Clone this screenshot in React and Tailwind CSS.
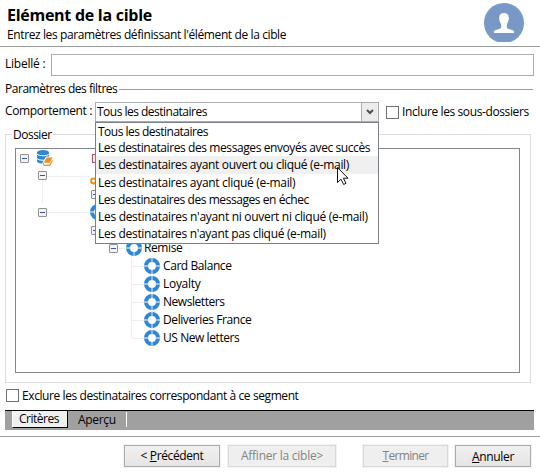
const Target = () => (
  <svg width="16" height="16" viewBox="0 0 16 16" className="shrink-0">
    <circle cx="8" cy="8" r="6" fill="none" stroke="#2f86d2" strokeWidth="4" />
    <path d="M8 0v4.200M8 11.800V16M0 8h4.200M11.800 8H16" stroke="#b9d8f2" strokeWidth="1.300" />
  </svg>
);

const Minus = () => (
  <span className="flex h-[9px] w-[9px] shrink-0 items-center justify-center rounded-[1px] border border-[#919191] bg-[#f4f4f4]">
    <span className="h-px w-[5px] bg-[#3b51a3]" />
  </span>
);

const Check = () => <span className="h-[13px] w-[13px] shrink-0 border border-[#707070] bg-white" />;

const Key = () => (
  <svg width="16" height="16" viewBox="0 0 16 16" className="shrink-0">
    <circle cx="3.500" cy="8" r="2.400" fill="none" stroke="#f09010" strokeWidth="2" />
    <path d="M6 8h9" stroke="#f09010" strokeWidth="2" />
  </svg>
);

const Database = () => (
  <svg width="16" height="16" viewBox="0 0 16 16" className="shrink-0">
    <path d="M0 2.500v8.500c0 3.500 12 3.500 12 0V2.500z" fill="#2f86d2" />
    <ellipse cx="6" cy="2.400" rx="6" ry="2.300" fill="#2f86d2" />
    <path d="M0 4c1.500 2.300 10.500 2.300 12 0M0 8.500c1.500 2.300 10.500 2.300 12 0" fill="none" stroke="#fff" strokeWidth="1" />
    <path d="M9 6.500h7v2L12.500 16H6l-1-2.500z" fill="#fff" />
    <path d="M9.500 7.500h6l-2.700 5.300H6.800z" fill="#f0921a" />
    <path d="M6.600 12.800c-.6 1.500 0 2.500 1 2.500h5l2.800-5" fill="none" stroke="#f0921a" strokeWidth="1.200" />
  </svg>
);

const options = [
  ["Tous les destinataires", "h-[17px]", "tracking-[-0.51px]"],
  ["Les destinataires des messages envoyés avec succès", "h-[16px]", "tracking-[-0.41px]"],
  ["Les destinataires ayant ouvert ou cliqué (e-mail)", "h-[18px] bg-[#f0f0f0]", "tracking-[-0.32px]"],
  ["Les destinataires ayant cliqué (e-mail)", "h-[17px]", "tracking-[-0.31px]"],
  ["Les destinataires des messages en échec", "h-[17px]", "tracking-[-0.44px]"],
  ["Les destinataires n'ayant ni ouvert ni cliqué (e-mail)", "h-[17px]", "tracking-[-0.3px]"],
  ["Les destinataires n'ayant pas cliqué (e-mail)", "h-[17px]", "tracking-[-0.32px]"],
];

const folders = [
  ["Card Balance", "tracking-[-0.42px]"],
  ["Loyalty", "tracking-[-0.3px]"],
  ["Newsletters", "tracking-[-0.45px]"],
  ["Deliveries France", "tracking-[-0.41px]"],
  ["US New letters", "tracking-[-0.43px]"],
];

export default function App() {
  return (
    <div className="flex h-[472px] w-[540px] flex-col overflow-hidden bg-white font-['Open_Sans',sans-serif] text-[12px] leading-4 whitespace-nowrap text-black">
      <header className="flex h-[47px] shrink-0 justify-between border-b border-[#9b9b9b] pr-[16px] pl-[7px]">
        <div>
          <h1 className="mt-[4px] h-[22px] text-[16px] leading-[22px] font-bold tracking-[-0.27px]">Elément de la cible</h1>
          <p className="mt-px tracking-[-0.39px]">Entrez les paramètres définissant l'élément de la cible</p>
        </div>
        <svg width="40" height="39" viewBox="0 0 40 39" className="mt-[3px]">
          <circle cx="20" cy="20" r="20" fill="#7899c6" />
          <path d="M20 10c3.400 0 5.200 2 4.800 6-.2 2.500-1.400 4-1.900 5v3.500c.3 2 6.100 2 7.100 3.500v2H10v-2c1-1.500 6.800-1.500 7.100-3.500V21c-.5-1-1.700-2.500-1.900-5-.4-4 1.400-6 4.800-6z" fill="#fff" />
        </svg>
      </header>

      <div className="mt-[7px] flex h-[22px] shrink-0 pl-[5px]">
        <label className="mt-[2px] w-[46px] tracking-[-0.22px]">Libellé :</label>
        <div className="w-[483px] border border-[#abadb3]" />
      </div>

      <div className="mt-[5px] flex h-4 shrink-0 items-center pl-[5px]">
        <span className="w-[114px] tracking-[-0.47px]">Paramètres des filtres</span>
        <span className="h-px w-[414px] bg-[#a0a0a0]" />
      </div>

      <div className="mt-[5px] flex h-[20px] shrink-0 pl-[5px]">
        <label className="w-[90px] pt-px tracking-[-0.37px]">Comportement :</label>
        <div className="relative flex w-[284px] justify-between border border-[#abadb3]">
          <span className="pt-px pl-px tracking-[-0.51px]">Tous les destinataires</span>
          <span className="flex w-[17px] items-center justify-center border-l border-[#abadb3] bg-[#ececec]">
            <svg width="8" height="6" viewBox="0 0 8 6"><path d="M1 1l3 3 3-3" fill="none" stroke="#505050" strokeWidth="2" /></svg>
          </span>
          <div className="absolute top-[19px] left-[-1px] z-10 h-[122px] w-[284px] border border-[#7b7e8b] bg-white">
            {options.map(([label, row, tracking]) => (
              <div key={label} className={"flex items-center pl-[2px] " + row}><span className={tracking}>{label}</span></div>
            ))}
            <svg width="14" height="21" viewBox="0 0 14 21" className="absolute top-[43px] left-[240px]">
              <path d="M1.500 1.500v15l3.500-3.300 2.600 5.300 2.400-1.200-2.600-5.100h4.600z" fill="#fff" stroke="#111" />
            </svg>
          </div>
        </div>
        <label className="flex items-center gap-[3px] pl-[7px]"><Check /><span className="tracking-[-0.39px]">Inclure les sous-dossiers</span></label>
      </div>

      <fieldset className="relative mt-[12px] ml-[5px] flex h-[249px] w-[526px] shrink-0 border border-[#dcdcdc] pt-[13px] pl-[9px]">
        <span className="absolute top-[-8px] left-[6px] bg-white px-[1px] tracking-[-0.5px]">Dossier</span>
        <div className="flex h-[225px] w-[505px] flex-col border border-[#828790]">
          <div className="flex h-[18px] items-center pl-[4px]">
            <Minus /><span className="w-[8px]" /><Database /><span className="w-[39px]" />
            <span className="h-[9px] w-[9px] border border-[#b0506a] bg-[#f3eaf0]" />
          </div>
          <div className="flex h-[18px] items-center pl-[22px]">
            <span className="flex h-full w-[9px] flex-col items-center">
              <span className="h-[4px] w-px bg-[#eee]" /><Minus /><span className="w-px grow bg-[#eee]" />
            </span>
            <span className="h-px w-[43px] bg-[#eee]" />
            <span className="mt-[10px]"><Key /></span>
          </div>
          <div className="flex h-[18px] items-center pl-[26px]">
            <span className="h-full w-[49px] border-l border-[#eee]" /><Minus />
          </div>
          <div className="flex h-[18px] items-center pl-[22px]"><Minus /><span className="h-px w-[43px] bg-[#eee]" /><Target /></div>
          <div className="flex h-[18px] items-center pl-[75px]"><Minus /></div>
          <div className="flex h-[18px] items-center pl-[93px]">
            <Minus /><span className="mr-px ml-px h-px w-[6px] bg-[#eee]" /><Target /><span className="pl-[2px] tracking-[-0.4px]">Remise</span>
          </div>
          {folders.map(([name, tracking], i) => (
            <div key={name} className="flex h-[18px] items-center pl-[115px]">
              <span className={i === folders.length - 1 ? "h-[9px] w-px self-start bg-[#eee]" : "h-full w-px bg-[#eee]"} />
              <span className="h-px w-[12px] bg-[#eee]" /><Target /><span className={"pl-[3px] " + tracking}>{name}</span>
            </div>
          ))}
        </div>
      </fieldset>

      <label className="mt-[4px] flex h-[17px] shrink-0 items-center gap-[3px] pl-[6px]"><Check /><span className="tracking-[-0.41px]">Exclure les destinataires correspondant à ce segment</span></label>

      <div className="mt-[6px] ml-[5px] flex h-[20px] w-[529px] shrink-0 border-t border-black bg-[#a0a0a0]">
        <div className="ml-[7px] h-[17px] w-[56px] border-r border-b border-l border-r-black border-b-black border-l-white bg-[#f0f0f0] pl-[6px] leading-[15px] tracking-[-0.5px]">Critères</div>
        <div className="mt-px h-[15px] w-[59px] border-r border-white pl-[10px] leading-[15px] tracking-[-0.3px]">Aperçu</div>
      </div>

      <footer className="mt-[6px] flex h-[36px] shrink-0 border-t border-[#a0a0a0] pt-[8px] pl-[124px]">
        <button className="h-[22px] w-[96px] border border-[#acacac] bg-linear-to-b from-[#f0f0f0] to-[#e5e5e5] tracking-[-0.38px] shadow-[0_0_0_1px_#f2f2f2]">&lt; <u>P</u>récédent</button>
        <button className="ml-[8px] h-[22px] w-[108px] border border-[#d9d9d9] bg-[#efefef] tracking-[-0.25px] text-[#838383] shadow-[0_0_0_1px_#f2f2f2]">Affiner la cible&gt;</button>
        <button className="ml-[27px] h-[22px] w-[85px] border border-[#d9d9d9] bg-[#efefef] tracking-[-0.7px] text-[#838383] shadow-[0_0_0_1px_#f2f2f2]"><u>T</u>erminer</button>
        <button className="ml-[7px] h-[22px] w-[76px] border border-[#acacac] bg-linear-to-b from-[#f0f0f0] to-[#e5e5e5] pt-px tracking-[-0.35px] shadow-[0_0_0_1px_#f2f2f2]"><u>A</u>nnuler</button>
      </footer>
    </div>
  );
}
